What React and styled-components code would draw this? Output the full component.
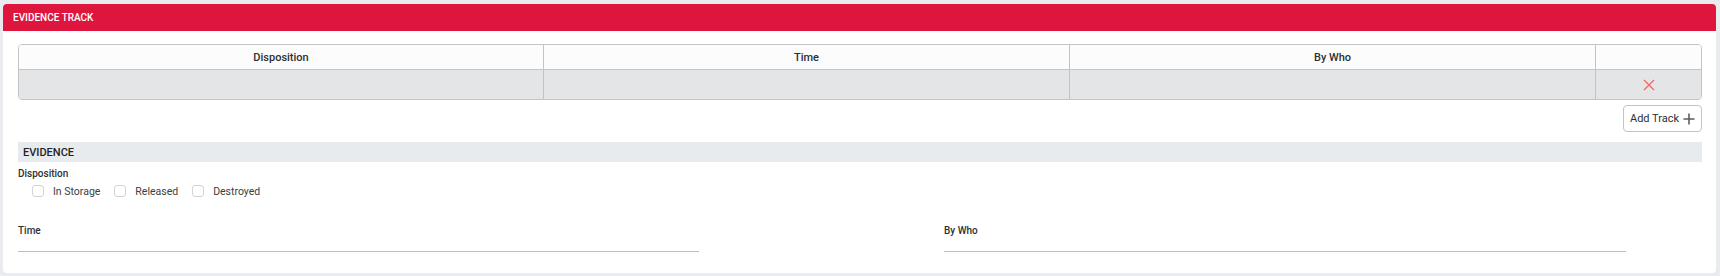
import styled, { createGlobalStyle } from 'styled-components';

const GlobalStyle = createGlobalStyle`
  body {
    margin: 0;
    background: #e9ebee;
    font-family: Roboto, "Liberation Sans", sans-serif;
    color: #2b2f33;
  }
`;

const Page = styled.div`
  padding: 4px 4px 3px 3px;
`;

const Card = styled.section`
  background: #fff;
  border-radius: 4px;
  overflow: hidden;
  height: 269px;
  box-sizing: border-box;
`;

const CardHeader = styled.header`
  height: 27px;
  background: #de153d;
  color: #fff;
  display: flex;
  align-items: center;
  padding-left: 10px;
  font-size: 10px;
  font-weight: 500;
  text-transform: uppercase;
`;

const CardBody = styled.div`
  padding: 13px 14px 0 15px;
`;

const TrackTable = styled.table`
  width: 100%;
  border-collapse: separate;
  border-spacing: 0;
  border: 1px solid #c4c4c4;
  border-radius: 4px;
  overflow: hidden;
  table-layout: fixed;
`;

const HeadCell = styled.th`
  height: 24px;
  padding: 0;
  background: #fcfcfc;
  border-bottom: 1px solid #c4c4c4;
  border-right: ${(p) => (p.$last ? 'none' : '1px solid #c4c4c4')};
  font-size: 11px;
  font-weight: 500;
  color: #2b2f33;
  width: ${(p) => p.$width};
`;

const BodyCell = styled.td`
  height: 29px;
  padding: 0;
  background: #e4e5e7;
  border-right: ${(p) => (p.$last ? 'none' : '1px solid #c4c4c4')};
  text-align: center;
  vertical-align: middle;
`;

const RemoveIcon = styled.svg`
  display: block;
  margin: 1px auto 0;
`;

const ActionsRow = styled.div`
  display: flex;
  justify-content: flex-end;
  padding-top: 5px;
`;

const AddButton = styled.button`
  box-sizing: border-box;
  width: 79px;
  height: 27px;
  display: flex;
  align-items: center;
  justify-content: center;
  gap: 4px;
  padding: 0;
  border: 1px solid #c4c4c4;
  border-radius: 4px;
  background: #fff;
  font-family: inherit;
  font-size: 11px;
  color: #2b2f33;
`;

const SectionBar = styled.div`
  margin-top: 10px;
  height: 20px;
  background: #e8ebee;
  display: flex;
  align-items: center;
  padding-left: 5px;
  font-size: 11px;
  font-weight: 500;
  color: #1f2326;
`;

const FieldLabel = styled.div`
  font-size: 10px;
  font-weight: 500;
  color: #2b2f33;
  margin-top: ${(p) => p.$top || 0}px;
`;

const CheckRow = styled.div`
  display: flex;
  align-items: center;
  padding-left: 14px;
  margin-top: 5px;
  height: 14px;
`;

const CheckOption = styled.label`
  display: flex;
  align-items: center;
  gap: 9px;
  margin-right: 14px;
  font-size: 10.5px;
  color: #3a3e42;
`;

const CheckBox = styled.span`
  box-sizing: border-box;
  width: 12px;
  height: 12px;
  border: 1px solid #d2d4d6;
  border-radius: 3px;
  background: #fff;
`;

const FieldGrid = styled.div`
  display: grid;
  grid-template-columns: 681px 682px;
  column-gap: 245px;
  margin-top: 27px;
`;

const Field = styled.div`
  display: flex;
  flex-direction: column;
`;

const UnderlineInput = styled.div`
  height: 1px;
  background: #bdbdbd;
  margin-top: 15px;
`;

const columns = [
  { title: 'Disposition', width: '524px' },
  { title: 'Time', width: '525px' },
  { title: 'By Who', width: '525px' },
  { title: '', width: 'auto' },
];

const options = ['In Storage', 'Released', 'Destroyed'];

const App = () => (
  <>
    <GlobalStyle />
    <Page>
      <Card>
        <CardHeader>Evidence Track</CardHeader>
        <CardBody>
          <TrackTable>
            <thead>
              <tr>
                {columns.map((c, i) => (
                  <HeadCell key={i} $width={c.width} $last={i === columns.length - 1}>
                    {c.title}
                  </HeadCell>
                ))}
              </tr>
            </thead>
            <tbody>
              <tr>
                <BodyCell />
                <BodyCell />
                <BodyCell />
                <BodyCell $last>
                  <RemoveIcon width="12" height="12" viewBox="0 0 12 12">
                    <path d="M1 1 L11 11 M11 1 L1 11" stroke="#f26b5e" strokeWidth="1.4" fill="none" />
                  </RemoveIcon>
                </BodyCell>
              </tr>
            </tbody>
          </TrackTable>
          <ActionsRow>
            <AddButton>
              Add Track
              <svg width="12" height="12" viewBox="0 0 12 12">
                <path d="M6 0.5 V11.5 M0.5 6 H11.5" stroke="#5a5e62" strokeWidth="1.6" fill="none" />
              </svg>
            </AddButton>
          </ActionsRow>
          <SectionBar>EVIDENCE</SectionBar>
          <FieldLabel $top={6}>Disposition</FieldLabel>
          <CheckRow>
            {options.map((o) => (
              <CheckOption key={o}>
                <CheckBox />
                {o}
              </CheckOption>
            ))}
          </CheckRow>
          <FieldGrid>
            <Field>
              <FieldLabel>Time</FieldLabel>
              <UnderlineInput />
            </Field>
            <Field>
              <FieldLabel>By Who</FieldLabel>
              <UnderlineInput />
            </Field>
          </FieldGrid>
        </CardBody>
      </Card>
    </Page>
  </>
);

export default App;
